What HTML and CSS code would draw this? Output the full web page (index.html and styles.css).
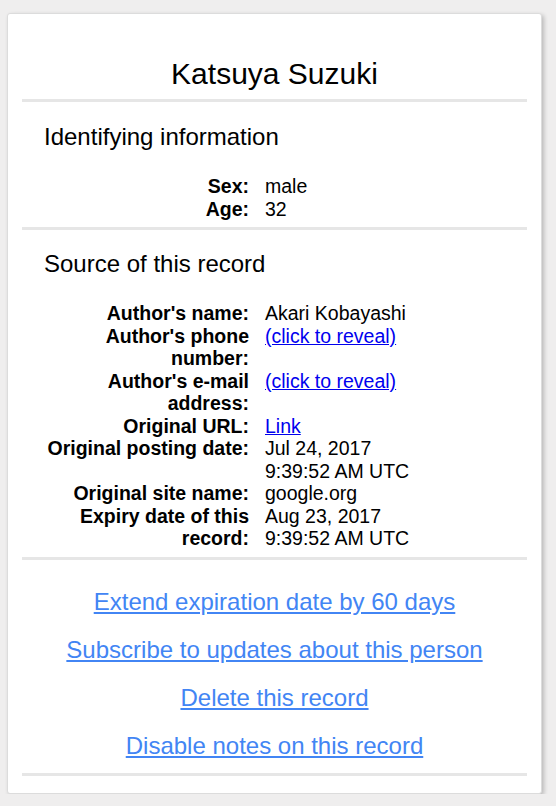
FILE: index.html
```html
<!DOCTYPE html>
<html>
<head>
<meta charset="utf-8">
<link rel="stylesheet" href="styles.css">
</head>
<body>
<div class="card">
  <div class="section title-section">
    <h1 class="title">Katsuya Suzuki</h1>
  </div>
  <div class="section info">
    <h2 class="heading">Identifying information</h2>
    <div class="fields">
      <div class="label">Sex:</div><div class="value">male</div>
      <div class="label">Age:</div><div class="value">32</div>
    </div>
  </div>
  <div class="section info">
    <h2 class="heading">Source of this record</h2>
    <div class="fields">
      <div class="label">Author's name:</div><div class="value">Akari Kobayashi</div>
      <div class="label">Author's phone number:</div><div class="value"><a href="#" class="plain-link">(click to reveal)</a></div>
      <div class="label">Author's e-mail address:</div><div class="value"><a href="#" class="plain-link">(click to reveal)</a></div>
      <div class="label">Original URL:</div><div class="value"><a href="#" class="plain-link">Link</a></div>
      <div class="label">Original posting date:</div><div class="value">Jul 24, 2017<br>9:39:52 AM UTC</div>
      <div class="label">Original site name:</div><div class="value">google.org</div>
      <div class="label">Expiry date of this record:</div><div class="value">Aug 23, 2017<br>9:39:52 AM UTC</div>
    </div>
  </div>
  <div class="section actions">
    <a href="#" class="action">Extend expiration date by 60 days</a>
    <a href="#" class="action">Subscribe to updates about this person</a>
    <a href="#" class="action">Delete this record</a>
    <a href="#" class="action">Disable notes on this record</a>
  </div>
</div>
</body>
</html>
```

FILE: styles.css
```css
html, body {
  margin: 0;
  padding: 0;
  background: #efeeee;
  font-family: "Liberation Sans", Arial, sans-serif;
  color: #000;
}

.card {
  box-sizing: border-box;
  margin: 13px 0 0 7px;
  width: 535px;
  height: 781px;
  background: #fff;
  border: 1px solid #dcdcdc;
  border-radius: 3px;
  box-shadow: 2px 2px 4px rgba(0, 0, 0, 0.22);
  padding: 0 14px;
}

.section {
  border-bottom: 3px solid #e6e6e6;
}

.title-section {
  padding: 44px 0 9px;
}

.title {
  margin: 0;
  font-weight: normal;
  font-size: 30px;
  line-height: 32px;
  text-align: center;
}

.info {
  padding: 21px 0 7px;
}

.info + .info {
  padding-top: 20px;
}

.heading {
  margin: 0 0 24px 22px;
  font-weight: normal;
  font-size: 24px;
  line-height: 28px;
}

.fields {
  display: grid;
  grid-template-columns: 205px 1fr;
  column-gap: 16px;
  margin-left: 22px;
  font-size: 19.5px;
  line-height: 22.5px;
}

.label {
  font-weight: bold;
  text-align: right;
}

.plain-link {
  color: #0000ee;
}

.actions {
  display: flex;
  flex-direction: column;
  align-items: center;
  gap: 22px;
  padding: 29px 0 14px;
}

.action {
  color: #4285f4;
  font-size: 24px;
  line-height: 26px;
}
```
